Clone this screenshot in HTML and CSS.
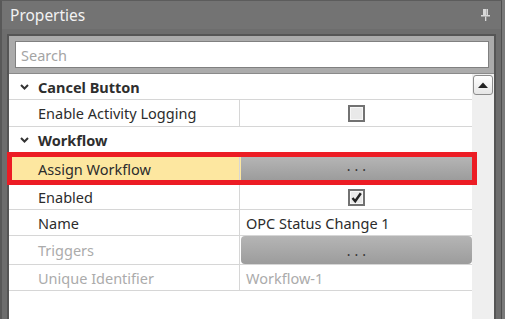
FILE: index.html
```html
<!DOCTYPE html>
<html>
<head>
<meta charset="utf-8">
<link rel="stylesheet" href="styles.css">
</head>
<body>
<div class="window">
  <div class="titlebar">
    <span class="title">Properties</span>
    <svg class="pin" width="9" height="12" viewBox="0 0 9 12">
      <rect x="2" y="0" width="5" height="6" fill="#d8d8d8"/>
      <rect x="5" y="0" width="1" height="6" fill="#b0b0b0"/>
      <rect x="0" y="6" width="9" height="1.5" fill="#d8d8d8"/>
      <rect x="4" y="7.5" width="1.3" height="4.5" fill="#d8d8d8"/>
    </svg>
  </div>
  <div class="body">
    <div class="frame">
      <div class="searchpanel">
        <div class="search">Search</div>
      </div>
      <div class="grid">
        <div class="rows">
          <div class="cat">
            <svg class="chev" width="9" height="6" viewBox="0 0 9 6"><polyline points="1,1 4.5,4.5 8,1" fill="none" stroke="#333" stroke-width="2"/></svg>
            <span>Cancel Button</span>
          </div>
          <div class="row h26">
            <div class="name">Enable Activity Logging</div>
            <div class="value center"><span class="check"></span></div>
          </div>
          <div class="cat cat2">
            <svg class="chev" width="9" height="6" viewBox="0 0 9 6"><polyline points="1,1 4.5,4.5 8,1" fill="none" stroke="#333" stroke-width="2"/></svg>
            <span>Workflow</span>
          </div>
          <div class="row highlight">
            <div class="name">Assign Workflow</div>
            <div class="value btncell"><div class="btn">...</div></div>
          </div>
          <div class="row h24">
            <div class="name">Enabled</div>
            <div class="value center"><span class="check">
              <svg width="13" height="13" viewBox="0 0 13 13"><path d="M2.5 7 L5.2 10.2 L10.8 2.2" fill="none" stroke="#222" stroke-width="2.4"/></svg>
            </span></div>
          </div>
          <div class="row h25">
            <div class="name">Name</div>
            <div class="value">OPC Status Change 1</div>
          </div>
          <div class="row h28">
            <div class="name disabled">Triggers</div>
            <div class="value btncell"><div class="btn round">...</div></div>
          </div>
          <div class="row h25">
            <div class="name disabled">Unique Identifier</div>
            <div class="value disabled">Workflow-1</div>
          </div>
        </div>
        <div class="scrollbar">
          <div class="up">
            <svg width="10" height="6" viewBox="0 0 10 6"><polygon points="0,6 5,0.5 10,6" fill="#222"/></svg>
          </div>
        </div>
      </div>
    </div>
  </div>
</div>
</body>
</html>
```

FILE: styles.css
```css
html, body {
  margin: 0;
  padding: 0;
}
body {
  background: #7a7a7a;
  width: 505px;
  height: 319px;
  overflow: hidden;
  font-family: "Noto Sans", "Open Sans", sans-serif;
}
.window {
  width: 502px;
  height: 319px;
  box-sizing: border-box;
  background: #6d6d6d;
  border-left: 2px solid #585858;
  border-right: 1px solid #4e4e4e;
  border-top: 1px solid #5c5c5c;
  display: flex;
  flex-direction: column;
}
.titlebar {
  height: 28px;
  flex: none;
  background: #737373;
  display: flex;
  align-items: center;
  justify-content: space-between;
  padding: 0 11px 0 8px;
}
.title {
  color: #f2f2f2;
  font-size: 15.5px;
  line-height: 1;
  margin-top: 1px;
}
.pin {
  margin-top: 0;
}
.body {
  flex: 1;
  padding: 5px 5px 0 5px;
  display: flex;
  min-height: 0;
}
.frame {
  flex: 1;
  border: 2px solid #555555;
  border-bottom: none;
  display: flex;
  flex-direction: column;
  min-height: 0;
}
.searchpanel {
  background: #ababab;
  padding: 5px 5px 5px 6px;
  border-bottom: 1px solid #8a8a8a;
  flex: none;
}
.search {
  height: 25px;
  background: #fff;
  border: 1px solid #808080;
  color: #a4a4a4;
  font-size: 14.5px;
  line-height: 26px;
  padding-left: 5px;
}
.grid {
  flex: 1;
  display: flex;
  background: #fff;
  min-height: 0;
}
.rows {
  flex: 1;
  display: flex;
  flex-direction: column;
}
.scrollbar {
  width: 22px;
  flex: none;
  background: #efefef;
  padding: 1px 1px 0 1px;
  box-sizing: border-box;
}
.up {
  width: 20px;
  height: 20px;
  box-sizing: border-box;
  border: 1px solid #8c8c8c;
  border-radius: 3px;
  background: linear-gradient(#ffffff, #e6e6e6);
  display: flex;
  align-items: center;
  justify-content: center;
}
.up svg { margin-top: -1px; }
.cat {
  height: 25px;
  flex: none;
  border-bottom: 1px solid #d6d6d6;
  display: flex;
  align-items: center;
  font-weight: bold;
  font-size: 14.5px;
  color: #2e2e2e;
}
.cat2 {
  height: 25px;
  border-bottom: none;
}
.chev {
  margin-left: 11px;
  margin-right: 9px;
}
.row {
  display: flex;
  flex: none;
  border-bottom: 1px solid #d6d6d6;
  font-size: 14.5px;
  color: #2c2c2c;
}
.h24 { height: 24px; }
.h25 { height: 25px; }
.h26 { height: 26px; }
.h28 { height: 28px; }
.name {
  width: 231px;
  flex: none;
  box-sizing: border-box;
  border-right: 1px solid #d6d6d6;
  padding-left: 29px;
  display: flex;
  align-items: center;
}
.value {
  flex: 1;
  display: flex;
  align-items: center;
  padding-left: 6px;
}
.center {
  justify-content: center;
  padding-left: 0;
}
.disabled {
  color: #ababab;
}
.check {
  width: 17px;
  height: 17px;
  box-sizing: border-box;
  border: 2px solid #727272;
  background: #e9e9e9;
  box-shadow: inset 0 0 0 1px #f7f7f7;
  display: flex;
  align-items: center;
  justify-content: center;
}
.btncell {
  padding-left: 1px;
  align-items: stretch;
}
.btn {
  flex: 1;
  background: linear-gradient(#b5b5b5, #9c9c9c);
  color: #333;
  font-size: 14px;
  letter-spacing: 4px;
  text-indent: 4px;
  display: flex;
  align-items: flex-end;
  justify-content: center;
  line-height: 1;
  padding-bottom: 6px;
}
.round {
  border-radius: 4px;
}
.highlight {
  position: relative;
  z-index: 1;
  height: 23px;
  border: 5px solid #ec1c24;
  margin-left: -2px;
  margin-right: -5px;
  background: #fde7a0;
}
.highlight .name {
  width: 228px;
  padding-left: 26px;
}
.highlight .btn {
  padding-bottom: 7px;
}
```
